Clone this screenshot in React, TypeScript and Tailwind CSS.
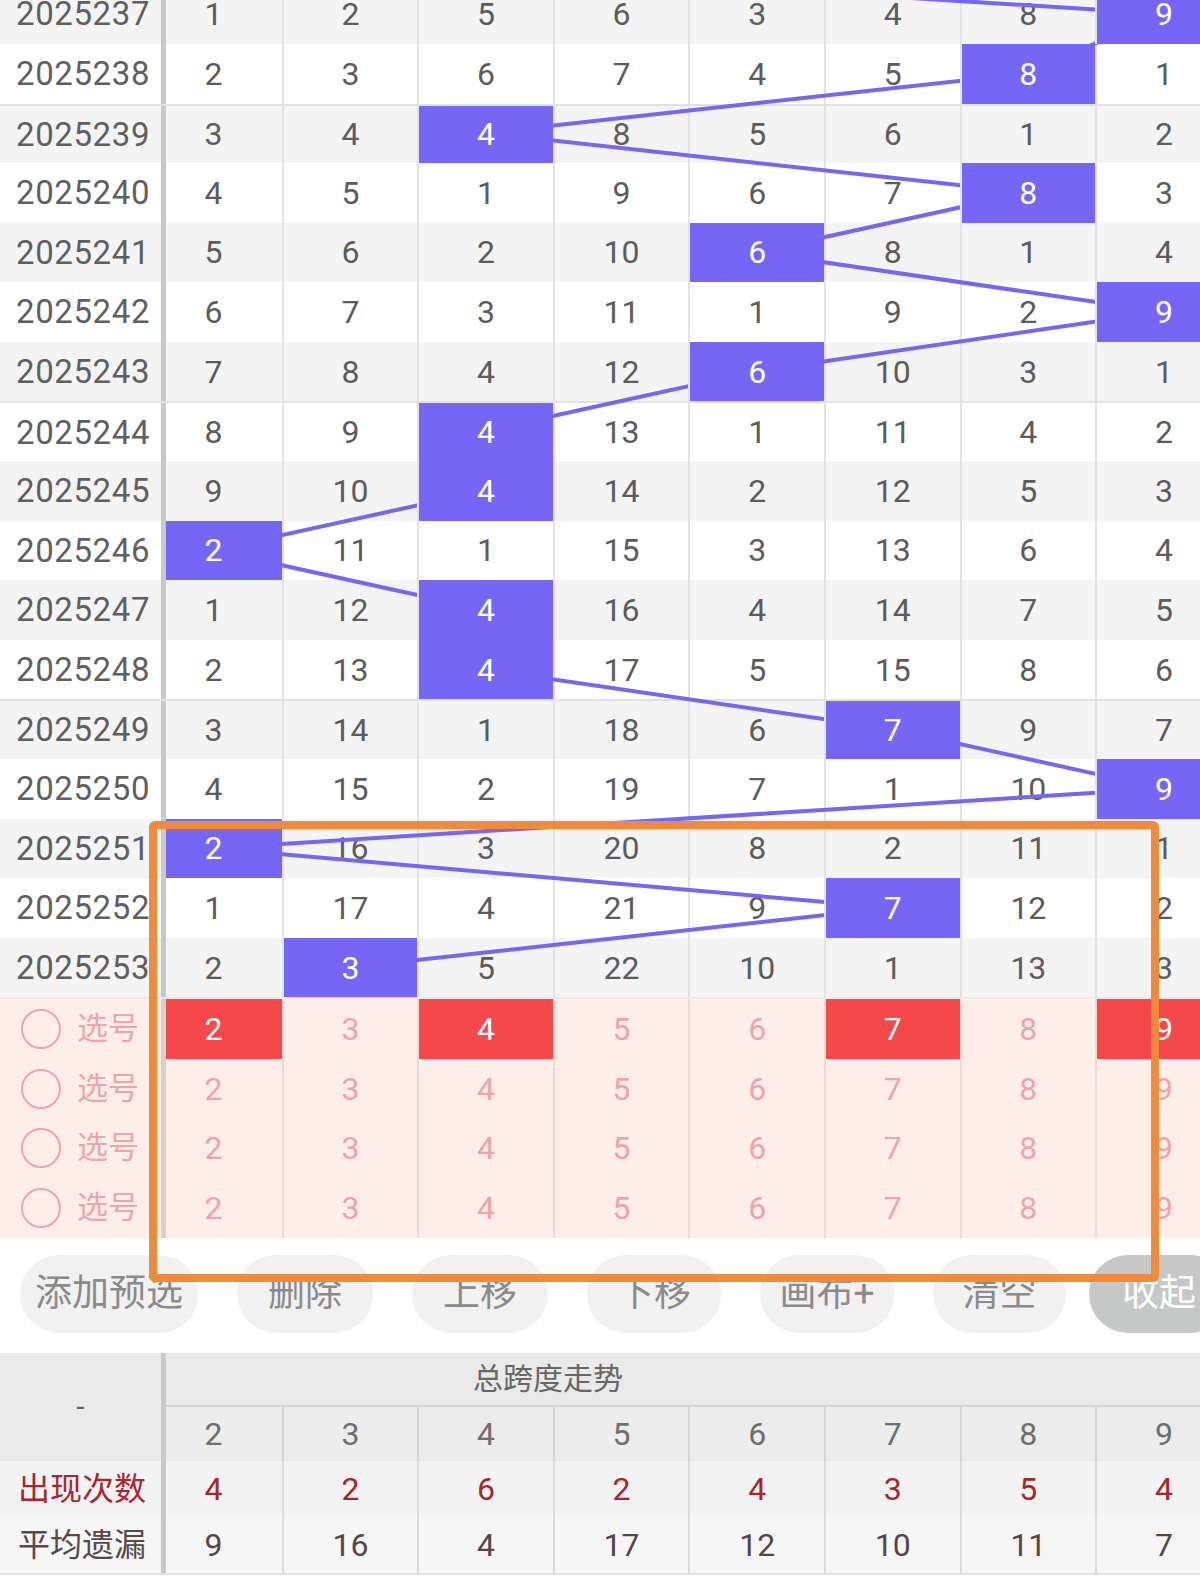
import React from "react";

// 走势图数据：每期 8 列的遗漏值，h 为当期开出的列
const ROWS = [
  { p: "2025237", v: [1, 2, 5, 6, 3, 4, 8, 9], h: 7 },
  { p: "2025238", v: [2, 3, 6, 7, 4, 5, 8, 1], h: 6 },
  { p: "2025239", v: [3, 4, 4, 8, 5, 6, 1, 2], h: 2 },
  { p: "2025240", v: [4, 5, 1, 9, 6, 7, 8, 3], h: 6 },
  { p: "2025241", v: [5, 6, 2, 10, 6, 8, 1, 4], h: 4 },
  { p: "2025242", v: [6, 7, 3, 11, 1, 9, 2, 9], h: 7 },
  { p: "2025243", v: [7, 8, 4, 12, 6, 10, 3, 1], h: 4 },
  { p: "2025244", v: [8, 9, 4, 13, 1, 11, 4, 2], h: 2 },
  { p: "2025245", v: [9, 10, 4, 14, 2, 12, 5, 3], h: 2 },
  { p: "2025246", v: [2, 11, 1, 15, 3, 13, 6, 4], h: 0 },
  { p: "2025247", v: [1, 12, 4, 16, 4, 14, 7, 5], h: 2 },
  { p: "2025248", v: [2, 13, 4, 17, 5, 15, 8, 6], h: 2 },
  { p: "2025249", v: [3, 14, 1, 18, 6, 7, 9, 7], h: 5 },
  { p: "2025250", v: [4, 15, 2, 19, 7, 1, 10, 9], h: 7 },
  { p: "2025251", v: [2, 16, 3, 20, 8, 2, 11, 1], h: 0 },
  { p: "2025252", v: [1, 17, 4, 21, 9, 7, 12, 2], h: 5 },
  { p: "2025253", v: [2, 3, 5, 22, 10, 1, 13, 3], h: 1 },
];

const LABELS = [2, 3, 4, 5, 6, 7, 8, 9];
const PICKED = [0, 2, 5, 7]; // 第一行选号已选中的列
const COUNTS = [4, 2, 6, 2, 4, 3, 5, 4];
const AVG_MISS = [9, 16, 4, 17, 12, 10, 11, 7];

const ROW_H = 59.6;
const COL_W = 135.6;
const FIRST_X = 213.4;

const colCls = (c: number) =>
  c === 0 ? "w-[115.6px] pr-[20.8px]" : "w-[135.6px] border-l-2";

function ChartRows() {
  // 折线：上一期(2025236)在第 1 列
  const pts = [{ x: FIRST_X, y: -ROW_H / 2 }].concat(
    ROWS.map((r, i) => ({ x: FIRST_X + COL_W * r.h, y: ROW_H * i + ROW_H / 2 }))
  );

  return (
    <div className="relative -mt-[15.7px]">
      {ROWS.map((row, i) => (
        <div
          key={row.p}
          className={`flex h-[59.6px] ${i % 2 === 0 ? "bg-[#f4f4f4]" : "bg-white"} ${
            i === 2 || i === 7 || i === 12 ? "border-t-2 border-[#e2e2e2]" : ""
          }`}
        >
          <div className="w-[166px] shrink-0 flex items-center pl-[16px] border-r-[5px] border-[#c9c9c9] text-[33px] tracking-[0.6px] text-[#5f5f5f]">
            {row.p}
          </div>
          {row.v.map((val, c) => (
            <div
              key={c}
              className={`${colCls(c)} shrink-0 flex items-center justify-center text-[32px] border-[#e3e3e3] ${
                c === row.h ? "relative z-10 bg-[#7666f6] text-white" : "text-[#5c5c5c]"
              }`}
            >
              {c === row.h ? LABELS[c] : val}
            </div>
          ))}
        </div>
      ))}
      <svg className="absolute left-0 top-0 w-[1230px] h-full overflow-visible pointer-events-none">
        <polyline
          points={pts.map((p) => `${p.x},${p.y}`).join(" ")}
          fill="none"
          stroke="#7666f6"
          strokeWidth={4}
          strokeLinejoin="round"
        />
      </svg>
    </div>
  );
}

function PickRows() {
  return (
    <div className="border-t-2 border-[#f3e6e2]">
      {[0, 1, 2, 3].map((r) => (
        <div key={r} className="flex h-[59.6px] bg-[#fdeee9]">
          <div className="w-[166px] shrink-0 flex items-center pl-[21px] gap-[16px] border-r-[5px] border-[#d9cfcc]">
            <span className="w-[40px] h-[40px] rounded-full border-2 border-[#eda4aa]" />
            <span className="text-[31px] text-[#eda4aa]">选号</span>
          </div>
          {LABELS.map((n, c) => {
            const on = r === 0 && PICKED.includes(c);
            return (
              <div
                key={c}
                className={`${colCls(c)} shrink-0 flex items-center justify-center text-[32px] border-[#ecdcd7] ${
                  on ? "bg-[#f5484a] text-white" : "text-[#efa3aa]"
                }`}
              >
                {n}
              </div>
            );
          })}
        </div>
      ))}
    </div>
  );
}

function ActionBar() {
  const btns = [
    { t: "添加预选", w: "w-[178px]" },
    { t: "删除", w: "w-[136px]" },
    { t: "上移", w: "w-[136px]" },
    { t: "下移", w: "w-[134px]" },
    { t: "画布+", w: "w-[134px]" },
    { t: "清空", w: "w-[133px]" },
  ];
  return (
    <div className="flex items-center gap-[23px] pl-[20px] pt-[17px] pb-[20px] bg-white">
      <div className="flex gap-[39px]">
        {btns.map((b) => (
          <button
            key={b.t}
            className={`${b.w} h-[78px] rounded-full bg-[#f1f1f1] text-[37px] text-[#8a8a8a] flex items-center justify-center`}
          >
            {b.t}
          </button>
        ))}
      </div>
      <button className="w-[140px] shrink-0 h-[78px] rounded-full bg-[#c6c8c8] text-[37px] text-white flex items-center justify-center">
        收起
      </button>
    </div>
  );
}

function Summary() {
  return (
    <div className="flex border-b-2 border-[#dedede]">
      <div className="w-[166px] shrink-0 border-r-[5px] border-[#c9c9c9]">
        <div className="h-[108px] bg-[#eaeaea] flex items-center justify-center text-[30px] text-[#666]">
          -
        </div>
        <div className="h-[56px] bg-[#f3f3f3] flex items-center pl-[18px] text-[32px] text-[#a8262d]">
          出现次数
        </div>
        <div className="h-[56px] bg-[#f6f6f6] flex items-center pl-[18px] text-[32px] text-[#584848]">
          平均遗漏
        </div>
      </div>
      <div className="flex-1 min-w-0">
        <div className="h-[54px] bg-[#e9e9e9] border-b-2 border-[#d3d3d3] flex items-center pl-[307px] text-[30px] text-[#666]">
          总跨度走势
        </div>
        <div className="flex h-[54px] bg-[#ececec]">
          {LABELS.map((n, c) => (
            <div
              key={c}
              className={`${colCls(c)} shrink-0 flex items-center justify-center text-[32px] text-[#6e6e6e] border-[#d4d4d4]`}
            >
              {n}
            </div>
          ))}
        </div>
        <div className="flex h-[56px] bg-[#f3f3f3]">
          {COUNTS.map((n, c) => (
            <div
              key={c}
              className={`${colCls(c)} shrink-0 flex items-center justify-center text-[32px] text-[#a5262c] border-[#dcdcdc]`}
            >
              {n}
            </div>
          ))}
        </div>
        <div className="flex h-[56px] bg-[#f6f6f6]">
          {AVG_MISS.map((n, c) => (
            <div
              key={c}
              className={`${colCls(c)} shrink-0 flex items-center justify-center text-[32px] text-[#584646] border-[#dcdcdc]`}
            >
              {n}
            </div>
          ))}
        </div>
      </div>
    </div>
  );
}

export default function App() {
  return (
    <div className="relative w-[1200px] h-[1577px] overflow-hidden bg-white font-['Roboto','Noto_Sans_CJK_SC',sans-serif]">
      <ChartRows />
      <PickRows />
      <ActionBar />
      <Summary />

      {/* 截图上的橙色标注框 */}
      <div className="absolute left-[149px] top-[821px] w-[1010px] h-[461px] border-[8px] border-[#ef8b3d] rounded-[6px] pointer-events-none z-20" />
    </div>
  );
}
